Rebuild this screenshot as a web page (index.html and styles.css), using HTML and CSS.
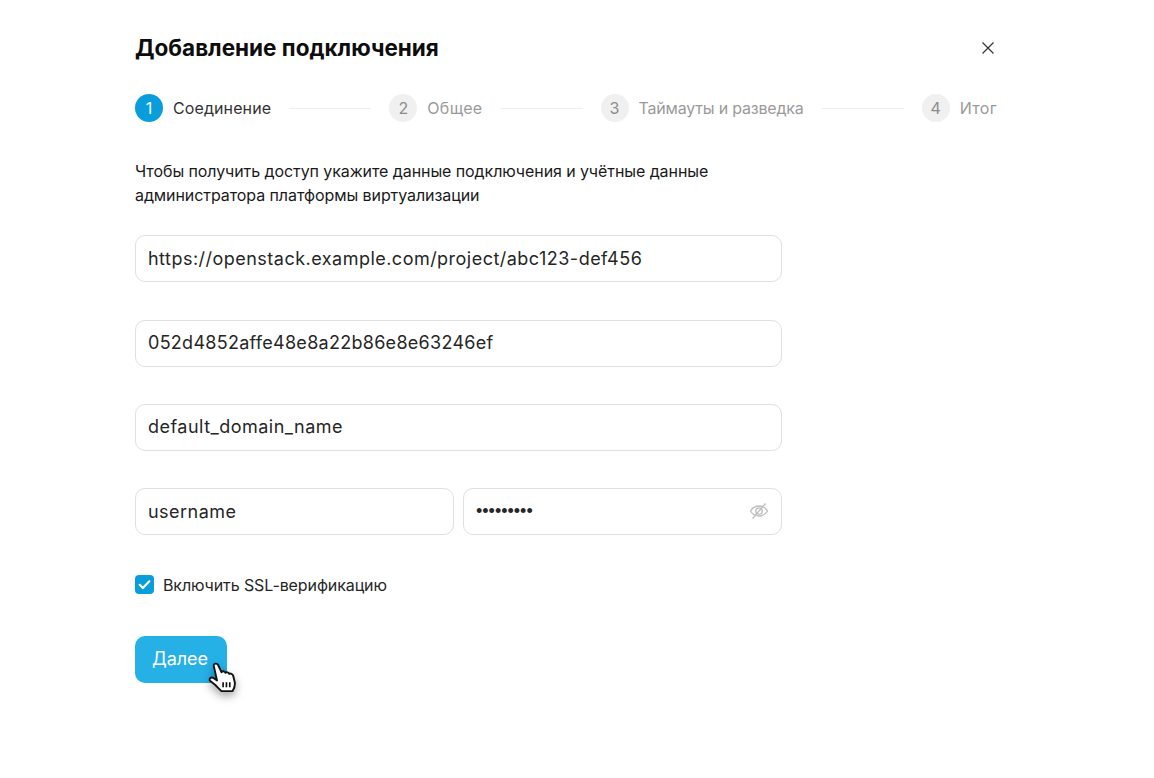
FILE: index.html
```html
<!DOCTYPE html>
<html lang="ru">
<head>
  <meta charset="UTF-8">
  <meta name="viewport" content="width=device-width, initial-scale=1.0">
  <title>Добавление подключения</title>
  <link rel="stylesheet" href="styles.css">
</head>
<body>

  <div class="dialog">
    <div class="dialog-header">
      <h1 class="dialog-title">Добавление подключения</h1>
      <svg class="close-icon" width="14" height="14" viewBox="0 0 14 14"><path d="M1.5 1.5l11 11M12.5 1.5l-11 11" stroke="#333" stroke-width="1.2" fill="none"/></svg>
    </div>

    <div class="steps">
      <div class="step active"><span class="step-num">1</span><span class="step-label">Соединение</span></div>
      <div class="step-line"></div>
      <div class="step"><span class="step-num">2</span><span class="step-label label-wide">Общее</span></div>
      <div class="step-line"></div>
      <div class="step"><span class="step-num">3</span><span class="step-label label-tight">Таймауты и разведка</span></div>
      <div class="step-line"></div>
      <div class="step"><span class="step-num">4</span><span class="step-label label-wide">Итог</span></div>
    </div>

    <p class="intro">Чтобы получить доступ укажите данные подключения и учётные данные администратора платформы виртуализации</p>

    <div class="form">
      <div class="field">https://openstack.example.com/project/abc123-def456</div>
      <div class="field field-key">052d4852affe48e8a22b86e8e63246ef</div>
      <div class="field">default_domain_name</div>
      <div class="field-row">
        <div class="field">username</div>
        <div class="field field-password">
          <span class="dots">•••••••••</span>
          <svg width="20" height="20" viewBox="0 0 20 20" fill="none" stroke="#bdbdbd" stroke-width="1.3"><path d="M1.5 10C3.5 6.7 6.5 5 10 5s6.5 1.7 8.5 5c-2 3.3-5 5-8.5 5s-6.5-1.7-8.5-5z"/><circle cx="10" cy="10" r="3.2"/><path d="M3.5 17.5L16.5 2.5"/></svg>
        </div>
      </div>
    </div>

    <label class="check">
      <span class="check-box"><svg width="15" height="15" viewBox="0 0 14 14"><path d="M2.5 7.3l3 3 6-6.3" stroke="#fff" stroke-width="2" fill="none" stroke-linecap="round" stroke-linejoin="round"/></svg></span>
      Включить SSL-верификацию
    </label>

    <div class="actions">
      <button class="next-button">Далее</button>
      <svg class="cursor" width="30" height="38" viewBox="0 0 27 34.2">
        <path d="M6 5C6 3 9 2.5 10 4.5L13 11C14 9.5 16 10 16.5 11.5C17.5 10.5 19.5 11 20 12.5C21 11.8 23 12.5 23.5 14L25 20C25.5 23 24.5 25.5 23 28L13 28C11 26 9.5 24.5 7.5 22.5L3 19C1.5 17.500 3 15 5.5 16L9 18.5Z" fill="#fff" stroke="#111" stroke-width="1.7" stroke-linejoin="round"/>
        <path d="M14.5 20v4.500M17.5 20v4.500M20.5 20v4.500" stroke="#111" stroke-width="1.5" fill="none"/>
      </svg>
    </div>
  </div>

</body>
</html>
```

FILE: styles.css
```css
body {
  margin: 0;
  background-color: white;
  font-family: Inter, 'Noto Sans', sans-serif;
  color: #1f1f1f;
}
.dialog {
  width: 862px;
  padding: 32px 0 70px 135px;
}
.dialog-header {
  display: flex;
  justify-content: space-between;
  align-items: center;
  height: 30px;
}
.dialog-title {
  margin: 0;
  font-size: 22.5px;
  font-weight: 700;
  color: #0d0d0d;
}
.close-icon {
  margin: 2px 2px 0 0;
}
.steps {
  display: flex;
  align-items: center;
  margin-top: 32px;
}
.step {
  display: flex;
  align-items: center;
  gap: 10px;
  font-size: 16px;
  letter-spacing: 0.1px;
  color: #9a9a9a;
  white-space: nowrap;
}
.step-num {
  width: 28px;
  height: 28px;
  border-radius: 50%;
  background-color: #f0f0f0;
  display: flex;
  justify-content: center;
  align-items: center;
  color: #8c8c8c;
}
.step.active {
  color: #333;
}
.step.active .step-num {
  background-color: #0a9ddb;
  color: white;
}
.label-wide {
  letter-spacing: 0.3px;
}
.label-tight {
  letter-spacing: -0.2px;
}
.step-line {
  flex: 1;
  height: 1px;
  margin: 0 18px;
  background-color: #ededed;
}
.intro {
  width: 620px;
  margin: 37px 0 0;
  font-size: 16px;
  letter-spacing: -0.08px;
  line-height: 24px;
  color: #1a1a1a;
}
.form {
  display: flex;
  flex-direction: column;
  gap: 37.4px;
  width: 647px;
  margin-top: 28.2px;
}
.field {
  box-sizing: border-box;
  height: 47px;
  padding: 0 12px 1px;
  display: flex;
  align-items: center;
  border: 1.5px solid #e0e0e0;
  border-radius: 10px;
  font-size: 18px;
  letter-spacing: 0.48px;
  color: #262626;
}
.field-key {
  letter-spacing: 0.28px;
}
.field-row {
  display: flex;
  gap: 9px;
}
.field-row .field {
  flex: 1;
}
.field-password {
  justify-content: space-between;
}
.dots {
  font-family: 'Liberation Sans', sans-serif;
  font-size: 18px;
  letter-spacing: 0;
}
.check {
  display: flex;
  align-items: center;
  gap: 9px;
  margin-top: 39.6px;
  font-size: 16px;
  letter-spacing: -0.1px;
  color: #262626;
}
.check-box {
  width: 19px;
  height: 19px;
  border-radius: 4px;
  background-color: #0a9ddb;
  display: flex;
  justify-content: center;
  align-items: center;
}
.actions {
  position: relative;
  margin-top: 41px;
}
.next-button {
  width: 92px;
  height: 47px;
  padding: 0 2px 2px 0;
  border: none;
  border-radius: 10px;
  background-color: #25b0e6;
  color: white;
  font-family: inherit;
  font-size: 18px;
}
.cursor {
  position: absolute;
  left: 72px;
  top: 24px;
  filter: drop-shadow(0 4px 4px rgba(0, 0, 0, 0.35));
}
```
